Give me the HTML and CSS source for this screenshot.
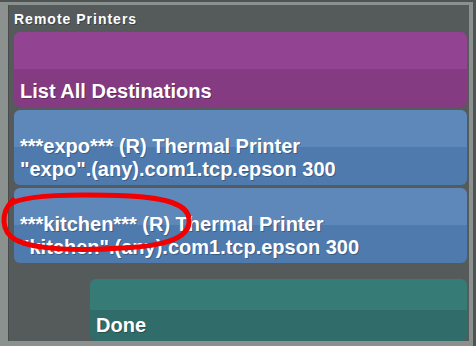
FILE: index.html
```html
<!DOCTYPE html>
<html lang="en">
<head>
    <meta charset="UTF-8">
    <title>Remote Printers</title>
    <link rel="stylesheet" href="styles.css">
</head>
<body>
    <div class="frame">
        <div class="panel">
            <h2 class="panel-title">Remote Printers</h2>

            <div class="list">
                <button class="btn btn-purple">List All Destinations</button>
                <button class="btn btn-blue">***expo*** (R) Thermal Printer<br>"expo".(any).com1.tcp.epson 300</button>
                <button class="btn btn-blue">***kitchen*** (R) Thermal Printer<br>"kitchen".(any).com1.tcp.epson 300</button>
            </div>

            <div class="footer">
                <button class="btn btn-teal btn-done">Done</button>
            </div>
        </div>
    </div>

    <!-- hand drawn markup over the kitchen row -->
    <svg class="scribble" width="476" height="346" viewBox="0 0 476 346">
        <path d="M 9 205 C 22 194, 80 194, 130 196 C 166 198, 188 204, 189 219 C 191 237, 168 246, 122 248 C 80 251, 36 250, 16 240 C 1 232, 0 213, 13 200"
              fill="none" stroke="#f20000" stroke-width="5" stroke-linecap="round"/>
    </svg>
</body>
</html>
```

FILE: styles.css
```css
/* General Styles */
body {
    margin: 0;
    width: 476px;
    height: 346px;
    background-color: #4e5353;
    font-family: "Liberation Sans", Arial, sans-serif;
    overflow: hidden;
}

.frame {
    width: 461px;
    height: 336px;
    margin-top: 2px;
    border-style: solid;
    border-color: #8b918f;
    border-width: 3px 4px 5px 8px;
}

.panel {
    height: 100%;
    box-sizing: border-box;
    background-color: #555a5a;
    border-left: 1px solid #474b4b;
    padding: 0 2px 0 5px;
    display: flex;
    flex-direction: column;
}

.panel-title {
    margin: 0;
    padding: 6px 0 0 0;
    height: 27px;
    box-sizing: border-box;
    font-size: 14px;
    letter-spacing: 1px;
    line-height: 16px;
    color: #fff;
    font-weight: bold;
    text-shadow: 1px 1px 0 rgba(0, 0, 0, 0.3);
}

.list {
    display: flex;
    flex-direction: column;
    gap: 3px;
}

.btn {
    display: flex;
    flex-direction: column;
    justify-content: flex-end;
    height: 75px;
    width: 100%;
    box-sizing: border-box;
    padding: 0 6px 4px 6px;
    border: none;
    border-radius: 6px;
    color: #fff;
    font-family: "Liberation Sans", Arial, sans-serif;
    font-size: 20px;
    font-weight: bold;
    line-height: 23px;
    text-align: left;
    text-shadow: 1px 1px 0 rgba(0, 0, 0, 0.25);
    cursor: pointer;
}

.btn-purple {
    background: linear-gradient(to bottom, #924391 50%, #843b81 50%);
}

.btn-blue {
    background: linear-gradient(to bottom, #5e88ba 50%, #4f7aad 50%);
}

.btn-teal {
    background: linear-gradient(to bottom, #377b77 50%, #306c69 50%);
}

.footer {
    display: flex;
    justify-content: flex-end;
    padding-top: 16px;
}

.btn-done {
    width: 377px;
    height: 62px;
}

.scribble {
    position: absolute;
    left: 0;
    top: 0;
    pointer-events: none;
}
```
